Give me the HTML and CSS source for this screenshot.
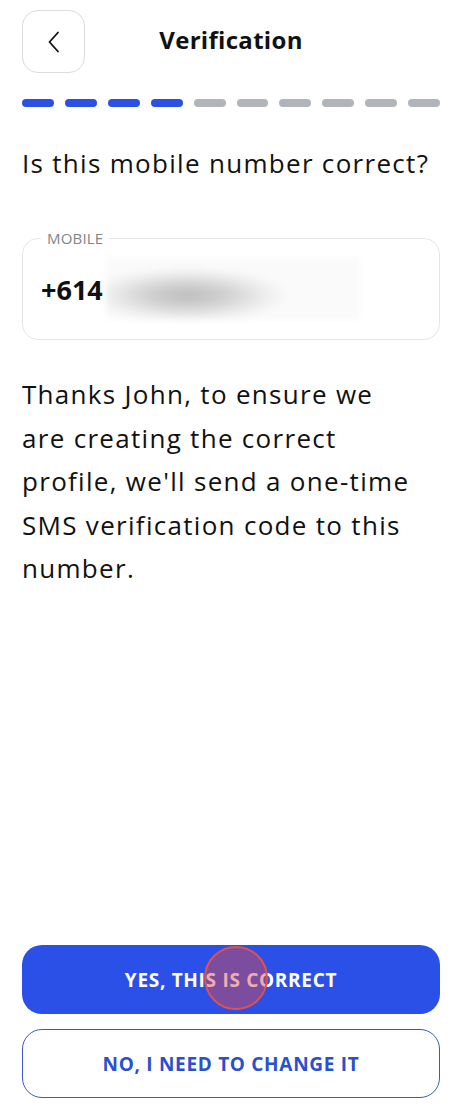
FILE: index.html
```html
<!DOCTYPE html>
<html lang="en">
<head>
    <meta charset="UTF-8">
    <meta name="viewport" content="width=device-width, initial-scale=1.0">
    <title>Verification</title>
    <link rel="stylesheet" href="styles.css">
</head>
<body>
    <div class="screen">
        <header class="top-bar">
            <button class="back-btn" aria-label="Back">
                <svg width="14" height="24" viewBox="0 0 14 24" fill="none">
                    <path d="M11 2.5 L2.5 12 L11 21.5" stroke="#111" stroke-width="1.8" stroke-linecap="round" stroke-linejoin="round"/>
                </svg>
            </button>
            <h1 class="page-title">Verification</h1>
            <span></span>
        </header>

        <div class="steps">
            <span class="step done"></span>
            <span class="step done"></span>
            <span class="step done"></span>
            <span class="step done"></span>
            <span class="step"></span>
            <span class="step"></span>
            <span class="step"></span>
            <span class="step"></span>
            <span class="step"></span>
            <span class="step"></span>
        </div>

        <h2 class="question">Is this mobile number correct?</h2>

        <fieldset class="field">
            <legend>MOBILE</legend>
            <div class="field-value">
                <span class="prefix">+614</span>
                <span class="hidden-number"></span>
            </div>
        </fieldset>

        <p class="info">Thanks John, to ensure we<br>are creating the correct<br>profile, we'll send a one-time<br>SMS verification code to this<br>number.</p>

        <div class="actions">
            <button class="btn btn-primary">YES, THIS IS CORRECT</button>
            <button class="btn btn-outline">NO, I NEED TO CHANGE IT</button>
            <span class="touch"></span>
        </div>
    </div>
</body>
</html>
```

FILE: styles.css
```css
/* General */
body {
    margin: 0;
    background: #fff;
    font-family: "Open Sans", sans-serif;
    color: #111;
}

.screen {
    min-height: 1120px;
    box-sizing: border-box;
    padding: 10px 22px 22px;
    display: flex;
    flex-direction: column;
}

/* Header */
.top-bar {
    display: grid;
    grid-template-columns: 63px 1fr 63px;
    align-items: center;
}

.back-btn {
    width: 63px;
    height: 63px;
    border: 1px solid #dcdcdc;
    border-radius: 16px;
    background: #fff;
    display: flex;
    align-items: center;
    justify-content: center;
    padding: 0;
}

.page-title {
    margin: 0 0 4px;
    text-align: center;
    font-size: 24px;
    font-weight: 700;
    letter-spacing: 0.3px;
}

/* Progress */
.steps {
    display: flex;
    gap: 11px;
    margin-top: 26px;
}

.step {
    flex: 1;
    height: 8px;
    border-radius: 4px;
    background: #b1b5bb;
}

.step.done {
    background: #2b50e8;
}

.question {
    margin: 40px 0 0;
    font-size: 26px;
    font-weight: 400;
    line-height: 32px;
    letter-spacing: 1.3px;
}

/* Mobile field */
.field {
    margin: 49px 0 0;
    border: 1.5px solid #e6e6e6;
    border-radius: 16px;
    padding: 0 18px;
    height: 112px;
    box-sizing: border-box;
}

.field legend {
    padding: 0 6px;
    font-size: 15px;
    color: #80858a;
    letter-spacing: 0.2px;
}

.field-value {
    display: flex;
    align-items: center;
    margin-top: 10px;
}

.prefix {
    font-size: 27px;
    font-weight: 700;
}

.hidden-number {
    width: 254px;
    height: 62px;
    margin-left: 3px;
    background: radial-gradient(ellipse 40% 45% at 32% 60%, #bdbdbd 0%, #d2d2d2 40%, #ececec 75%, #fafafa 100%);
    filter: blur(3px);
}

.info {
    margin: 33px 0 0;
    font-size: 26px;
    line-height: 43.5px;
    letter-spacing: 1.3px;
}

/* Buttons */
.actions {
    margin-top: auto;
    display: flex;
    flex-direction: column;
    gap: 15px;
    position: relative;
}

.btn {
    height: 69px;
    border-radius: 20px;
    font-family: inherit;
    font-size: 19px;
    font-weight: 700;
    letter-spacing: 0.7px;
}

.btn-primary {
    background: #2b50e8;
    color: #fff;
    border: none;
}

.btn-outline {
    background: #fff;
    color: #2a4fcf;
    border: 1.5px solid #3a58c8;
}

.touch {
    position: absolute;
    left: 182px;
    top: 1px;
    width: 64px;
    height: 64px;
    border-radius: 50%;
    border: 2px solid #e05050;
    background: rgba(225, 70, 70, 0.45);
    box-sizing: border-box;
}
```
